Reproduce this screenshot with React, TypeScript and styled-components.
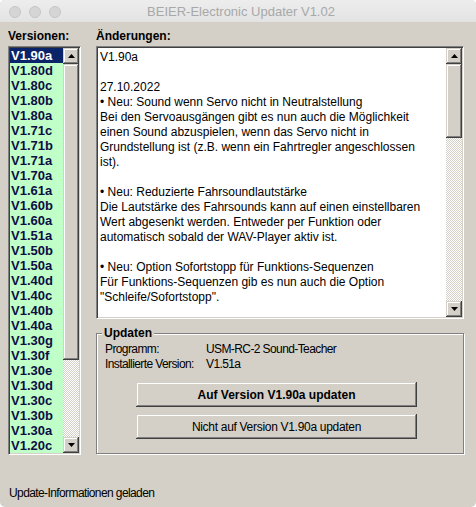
import React from 'react';
import styled, { createGlobalStyle } from 'styled-components';

const GlobalStyle = createGlobalStyle`
  html, body {
    margin: 0;
    padding: 0;
    background: #ffffff;
  }
  * {
    box-sizing: border-box;
  }
`;

const face = '#d4d0c8';
const sans = '"Liberation Sans", Arial, sans-serif';

const Window = styled.div`
  width: 476px;
  height: 507px;
  background: ${face};
  border-radius: 5px;
  overflow: hidden;
  display: flex;
  flex-direction: column;
  font-family: ${sans};
  color: #000;
`;

const TitleBar = styled.div`
  height: 22px;
  flex: none;
  display: flex;
  align-items: center;
  background: linear-gradient(#ededed, #e3e3e3);
`;

const Lights = styled.div`
  display: flex;
  gap: 8px;
  padding-left: 9px;
  padding-top: 1px;
`;

const Light = styled.span`
  width: 12px;
  height: 12px;
  border-radius: 50%;
  background: #d5d5d5;
  border: 1px solid #c6c6c6;
`;

const Title = styled.div`
  flex: 1;
  text-align: center;
  margin-left: -55px;
  padding-top: 1px;
  font-size: 13px;
  color: #a8a8a8;
  white-space: nowrap;
`;

const Body = styled.div`
  display: flex;
  gap: 15px;
  padding: 7px 12px 0 8px;
`;

const Column = styled.div<{ $width: number }>`
  width: ${({ $width }) => $width}px;
  display: flex;
  flex-direction: column;
`;

const Label = styled.div`
  font-size: 12px;
  font-weight: 700;
  line-height: 14px;
  margin-bottom: 3px;
  white-space: nowrap;
`;

const Sunken = styled.div<{ $height: number }>`
  height: ${({ $height }) => $height}px;
  display: flex;
  border: 1px solid;
  border-color: #808080 #ffffff #ffffff #808080;
  box-shadow: inset 1px 1px #404040, inset -1px -1px ${face};
  padding: 1px;
`;

const Items = styled.div`
  flex: 1;
  background: #c0ffc8;
  overflow: hidden;
`;

const Item = styled.div<{ $selected?: boolean }>`
  height: 15px;
  line-height: 15px;
  padding-left: 1px;
  font-size: 13px;
  font-weight: 700;
  color: ${({ $selected }) => ($selected ? '#ffffff' : '#0e0e44')};
  background: ${({ $selected }) => ($selected ? '#0a246a' : 'transparent')};
  white-space: nowrap;
`;

const ScrollBar = styled.div`
  width: 16px;
  flex: none;
  display: flex;
  flex-direction: column;
`;

const raised = `
  background: ${face};
  box-shadow: inset -1px -1px #404040, inset 1px 1px ${face},
    inset -2px -2px #808080, inset 2px 2px #ffffff;
`;

const ScrollButton = styled.div`
  height: 16px;
  flex: none;
  display: flex;
  align-items: center;
  justify-content: center;
  ${raised}
`;

const Thumb = styled.div<{ $size: number }>`
  height: ${({ $size }) => $size}px;
  flex: none;
  ${raised}
`;

const Track = styled.div`
  flex: 1;
  background: repeating-conic-gradient(#ffffff 0 25%, ${face} 0 50%) 0 0 / 2px 2px;
`;

const TextArea = styled.div`
  flex: 1;
  background: #ffffff;
  padding: 2px 0 0 2px;
  overflow: hidden;
  font-size: 12px;
`;

const Line = styled.div`
  height: 15px;
  line-height: 15px;
  white-space: pre;
`;

const GroupBox = styled.fieldset`
  margin: 7px 0 0 0;
  padding: 1px 8px 14px 8px;
  border: 1px solid #808080;
  box-shadow: inset 1px 1px #ffffff, 1px 1px #ffffff;
  min-width: 0;
`;

const Legend = styled.legend`
  padding: 0 2px;
  margin-left: -3px;
  font-size: 12px;
  font-weight: 700;
  line-height: 14px;
  background: ${face};
`;

// the dialog's plain captions use a tight, narrow face
const InfoGrid = styled.div`
  display: grid;
  grid-template-columns: 101px auto;
  grid-auto-rows: 15px;
  align-items: center;
  font-size: 12px;
  letter-spacing: -0.6px;
  white-space: nowrap;
`;

const Buttons = styled.div`
  display: flex;
  flex-direction: column;
  gap: 7px;
  margin: 11px 0 0 31px;
  width: 281px;
`;

const Button = styled.button<{ $primary?: boolean }>`
  height: 25px;
  border: none;
  padding: 0;
  ${raised}
  font-family: ${sans};
  font-size: 12px;
  font-weight: ${({ $primary }) => ($primary ? 700 : 400)};
  letter-spacing: ${({ $primary }) => ($primary ? '0' : '-0.3px')};
  color: #000;
  cursor: pointer;
  white-space: nowrap;
`;

const StatusBar = styled.div`
  margin-top: auto;
  padding: 0 9px 7px;
  font-size: 12px;
  line-height: 14px;
  letter-spacing: -0.6px;
`;

const Arrow = ({ down }: { down?: boolean }) => (
  <svg width="7" height="4" viewBox="0 0 7 4">
    <path d={down ? 'M0 0h7L3.5 4z' : 'M0 4h7L3.5 0z'} fill="#000" />
  </svg>
);

const Scroller = ({ thumb }: { thumb: number }) => (
  <ScrollBar>
    <ScrollButton>
      <Arrow />
    </ScrollButton>
    <Thumb $size={thumb} />
    <Track />
    <ScrollButton>
      <Arrow down />
    </ScrollButton>
  </ScrollBar>
);

const versions = [
  'V1.90a', 'V1.80d', 'V1.80c', 'V1.80b', 'V1.80a', 'V1.71c', 'V1.71b', 'V1.71a',
  'V1.70a', 'V1.61a', 'V1.60b', 'V1.60a', 'V1.51a', 'V1.50b', 'V1.50a', 'V1.40d',
  'V1.40c', 'V1.40b', 'V1.40a', 'V1.30g', 'V1.30f', 'V1.30e', 'V1.30d', 'V1.30c',
  'V1.30b', 'V1.30a', 'V1.20c',
];

const changes = [
  'V1.90a',
  '',
  '27.10.2022',
  '\u2022 Neu: Sound wenn Servo nicht in Neutralstellung',
  'Bei den Servoausgängen gibt es nun auch die Möglichkeit',
  'einen Sound abzuspielen, wenn das Servo nicht in',
  'Grundstellung ist (z.B. wenn ein Fahrtregler angeschlossen',
  'ist).',
  '',
  '\u2022 Neu: Reduzierte Fahrsoundlautstärke',
  'Die Lautstärke des Fahrsounds kann auf einen einstellbaren',
  'Wert abgesenkt werden. Entweder per Funktion oder',
  'automatisch sobald der WAV-Player aktiv ist.',
  '',
  '\u2022 Neu: Option Sofortstopp für Funktions-Sequenzen',
  'Für Funktions-Sequenzen gib es nun auch die Option',
  '"Schleife/Sofortstopp".',
];

export default function App() {
  const selected = versions[0];

  return (
    <>
      <GlobalStyle />
      <Window>
        <TitleBar>
          <Lights>
            <Light />
            <Light />
            <Light />
          </Lights>
          <Title>BEIER-Electronic Updater V1.02</Title>
        </TitleBar>

        <Body>
          <Column $width={73}>
            <Label>Versionen:</Label>
            <Sunken $height={409}>
              <Items>
                {versions.map(v => (
                  <Item key={v} $selected={v === selected}>
                    {v}
                  </Item>
                ))}
              </Items>
              <Scroller thumb={296} />
            </Sunken>
          </Column>

          <Column $width={368}>
            <Label>Änderungen:</Label>
            <Sunken $height={273}>
              <TextArea>
                {changes.map((line, i) => (
                  <Line key={i}>{line}</Line>
                ))}
              </TextArea>
              <Scroller thumb={74} />
            </Sunken>

            <GroupBox>
              <Legend>Updaten</Legend>
              <InfoGrid>
                <span>Programm:</span>
                <span>USM-RC-2 Sound-Teacher</span>
                <span>Installierte Version:</span>
                <span>V1.51a</span>
              </InfoGrid>
              <Buttons>
                <Button $primary>Auf Version {selected} updaten</Button>
                <Button>Nicht auf Version {selected} updaten</Button>
              </Buttons>
            </GroupBox>
          </Column>
        </Body>

        <StatusBar>Update-Informationen geladen</StatusBar>
      </Window>
    </>
  );
}
